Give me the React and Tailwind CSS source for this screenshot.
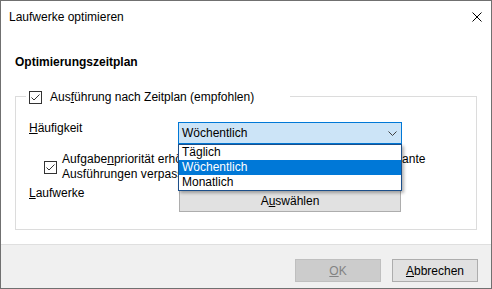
import React from 'react';

const CheckBox = () => (
  <span className="w-[13px] h-[13px] border border-[#333333] bg-white flex items-center justify-center shrink-0">
    <svg width="11" height="11" viewBox="0 0 11 11">
      <polyline points="1.5,5.5 4,8 9.5,2.5" fill="none" stroke="#333333" strokeWidth="1" />
    </svg>
  </span>
);

const Btn = ({ children, disabled }) => (
  <button
    disabled={disabled}
    className={`w-[86px] h-[23px] border flex items-center justify-center ${
      disabled ? 'bg-[#cccccc] border-[#bfbfbf] text-[#838383]' : 'bg-[#e1e1e1] border-[#adadad] text-black'
    }`}
  >
    {children}
  </button>
);

export default function App() {
  return (
    <div className="w-[492px] h-[289px] border border-[#707070] bg-white flex flex-col text-[12px] text-black font-['Liberation_Sans',Arial,sans-serif]">
      {/* Title bar */}
      <div className="h-[31px] flex items-center justify-between pl-[8px] pr-[9px] shrink-0">
        <span>Laufwerke optimieren</span>
        <svg width="10" height="10" viewBox="0 0 10 10">
          <path d="M0.5 0.5 L9.5 9.5 M9.5 0.5 L0.5 9.5" stroke="#000" strokeWidth="1" />
        </svg>
      </div>

      {/* Content */}
      <div className="flex-1 px-[14px]">
        <div className="pt-[22px] leading-[16px] font-bold">Optimierungszeitplan</div>

        <fieldset className="mt-[18px] w-[462px] border border-[#dcdcdc] pb-[17px]">
          <legend className="ml-[10px] px-[3px] w-[264px] h-[16px] flex items-center gap-[8px]">
            <span className="translate-y-[1px] flex items-center gap-[8px]">
              <CheckBox />
              <span>
                Aus<span className="underline">f</span>ührung nach Zeitplan (empfohlen)
              </span>
            </span>
          </legend>

          {/* Häufigkeit */}
          <div className="flex items-start mt-[18px] pl-[13px]">
            <div className="w-[149px] leading-[15px] -mt-[1px]">
              <span className="underline">H</span>äufigkeit
            </div>
            <div className="relative w-[224px]">
              <div className="h-[22px] border border-[#0078d7] bg-[#cce4f7] flex items-center justify-between pl-[3px] pr-[4px]">
                <span>Wöchentlich</span>
                <svg width="9" height="5" viewBox="0 0 9 5">
                  <polyline points="0.5,0.5 4.5,4.5 8.5,0.5" fill="none" stroke="#404040" strokeWidth="1" />
                </svg>
              </div>
              <div className="absolute left-0 top-full z-10 w-[224px] bg-white border border-[#1c4f8a] shadow-[2px_2px_3px_rgba(0,0,0,0.3)] leading-[15px]">
                <div className="h-[15px] pl-[3px]">Täglich</div>
                <div className="h-[15px] pl-[3px] bg-[#0078d7] text-white">Wöchentlich</div>
                <div className="h-[15px] pl-[3px]">Monatlich</div>
              </div>
            </div>
          </div>

          {/* Priorität */}
          <div className="flex items-center mt-[8px] pl-[28px]">
            <CheckBox />
            <div className="ml-[5px] leading-[15px] whitespace-nowrap tracking-[0.06px]">
              Aufgabe<span className="underline">n</span>priorität erhöhen, wenn drei aufeinanderfolgende geplante
              <br />
              Ausführungen verpasst werden
            </div>
          </div>

          {/* Laufwerke */}
          <div className="flex items-start mt-[4px] pl-[13px]">
            <div className="w-[149px] leading-[15px]">
              <span className="underline">L</span>aufwerke
            </div>
            <button className="mt-[3px] ml-[1px] w-[222px] h-[23px] bg-[#e1e1e1] border border-[#adadad] flex items-center justify-center">
              A<span className="underline">u</span>swählen
            </button>
          </div>
        </fieldset>
      </div>

      {/* Footer */}
      <div className="h-[44px] shrink-0 border-t border-[#dfdfdf] bg-[#f0f0f0] flex justify-end items-start pt-[14px] pr-[13px] gap-[11px]">
        <Btn disabled>
          <span className="underline">O</span>K
        </Btn>
        <Btn>
          <span className="underline">A</span>bbrechen
        </Btn>
      </div>
    </div>
  );
}
